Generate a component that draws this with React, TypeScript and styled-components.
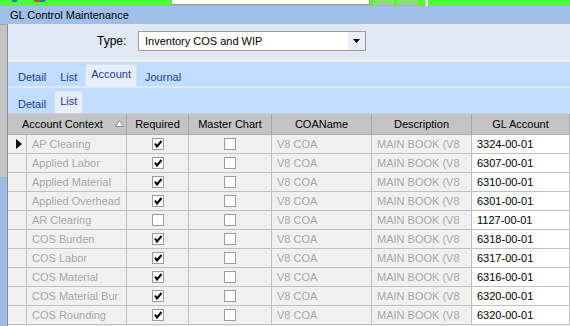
import React, { FC } from "react";
import styled, { createGlobalStyle } from "styled-components";

const GlobalStyle = createGlobalStyle`
  html, body {
    margin: 0;
    padding: 0;
    overflow: hidden;
    background: #ffffff;
  }
  body {
    font-family: "Liberation Sans", Arial, sans-serif;
    font-size: 11px;
    color: #000000;
  }
`;

type Row = {
  context: string;
  required: boolean;
  gl: string;
};

const rows: Row[] = [
  { context: "AP Clearing", required: true, gl: "3324-00-01" },
  { context: "Applied Labor", required: true, gl: "6307-00-01" },
  { context: "Applied Material", required: true, gl: "6310-00-01" },
  { context: "Applied Overhead", required: true, gl: "6301-00-01" },
  { context: "AR Clearing", required: false, gl: "1127-00-01" },
  { context: "COS Burden", required: true, gl: "6318-00-01" },
  { context: "COS Labor", required: true, gl: "6317-00-01" },
  { context: "COS Material", required: true, gl: "6316-00-01" },
  { context: "COS Material Bur", required: true, gl: "6320-00-01" },
  { context: "COS Rounding", required: true, gl: "6320-00-01" },
];

const COLS = "19px 100px 62px 83px 100px 100px 98px";

const CheckBox: FC<{ checked: boolean }> = ({ checked }) => (
  <svg width="12" height="12" viewBox="0 0 12 12">
    <rect x="0.5" y="0.5" width="11" height="11" fill="#ffffff" stroke="#9c9c9c" />
    {checked && (
      <path d="M3 5.5 L5 8.5 L9.5 3" fill="none" stroke="#000000" strokeWidth="2" />
    )}
  </svg>
);

const SortArrow: FC = () => (
  <svg width="9" height="7" viewBox="0 0 9 7">
    <path d="M4.5 0.5 L8.5 6.5 L0.5 6.5 Z" fill="#ffffff" stroke="#8a8a8a" />
  </svg>
);

const RowPointer: FC = () => (
  <svg width="6" height="10" viewBox="0 0 6 10">
    <path d="M0 0 L6 5 L0 10 Z" fill="#000000" />
  </svg>
);

export const App: FC = () => {
  return (
    <ScPage>
      <GlobalStyle />
      <ScTopStrip>
        <ScStripBit $color="#2f6fe0" $left={12} $width={5} />
        <ScStripBit $color="#a0642c" $left={17} $width={6} />
        <ScStripBit $color="#2f6fe0" $left={0} $width={5} />
        <ScStripField />
        <ScStripButton $left={3} />
        <ScStripButton $left={3} />
        <ScStripDivider />
      </ScTopStrip>
      <ScTitleBar>GL Control Maintenance</ScTitleBar>
      <ScBody>
        <ScLeftRail>
          <ScRailHandle />
        </ScLeftRail>
        <ScMain>
          <ScFilterPanel>
            <ScLabel>Type:</ScLabel>
            <ScSelect>
              <ScSelectText>Inventory COS and WIP</ScSelectText>
              <ScSelectButton>
                <svg width="7" height="4" viewBox="0 0 7 4">
                  <path d="M0 0 L7 0 L3.5 4 Z" fill="#000000" />
                </svg>
              </ScSelectButton>
            </ScSelect>
          </ScFilterPanel>
          <ScGap />
          <ScTabBar $height={24}>
            <ScTab>Detail</ScTab>
            <ScTab>List</ScTab>
            <ScTab $active>Account</ScTab>
            <ScTab>Journal</ScTab>
          </ScTabBar>
          <ScTabSeparator />
          <ScTabBar $height={25}>
            <ScTab>Detail</ScTab>
            <ScTab $active>List</ScTab>
          </ScTabBar>
          <ScGrid>
            <ScHeaderRow>
              <ScHeadCell $span={2} $align="left">
                <span>Account Context</span>
                <ScSortSlot>
                  <SortArrow />
                </ScSortSlot>
              </ScHeadCell>
              <ScHeadCell>Required</ScHeadCell>
              <ScHeadCell>Master Chart</ScHeadCell>
              <ScHeadCell>COAName</ScHeadCell>
              <ScHeadCell>Description</ScHeadCell>
              <ScHeadCell>GL Account</ScHeadCell>
            </ScHeaderRow>
            {rows.map((row, i) => (
              <ScDataRow key={row.context}>
                <ScIndicatorCell>{i === 0 && <RowPointer />}</ScIndicatorCell>
                <ScCell>{row.context}</ScCell>
                <ScCell $center>
                  <CheckBox checked={row.required} />
                </ScCell>
                <ScCell $center>
                  <CheckBox checked={false} />
                </ScCell>
                <ScCell>V8 COA</ScCell>
                <ScCell>MAIN BOOK (V8</ScCell>
                <ScCell $editable>{row.gl}</ScCell>
              </ScDataRow>
            ))}
          </ScGrid>
        </ScMain>
      </ScBody>
    </ScPage>
  );
};

export default App;

const ScPage = styled.div`
  width: 570px;
  height: 326px;
  display: flex;
  flex-direction: column;
  overflow: hidden;
`;

const ScTopStrip = styled.div`
  height: 6px;
  flex: 0 0 6px;
  display: flex;
  align-items: flex-start;
  background: #52fc2e;
`;

const ScStripBit = styled.div<{ $color: string; $left: number; $width: number }>`
  width: ${({ $width }) => $width}px;
  height: 2px;
  margin-left: ${({ $left }) => $left}px;
  background: ${({ $color }) => $color};
`;

const ScStripField = styled.div`
  width: 197px;
  height: 4px;
  margin-left: 127px;
  background: #ffffff;
  border-right: 1px solid #9a9a9a;
  border-bottom: 1px solid #9a9a9a;
`;

const ScStripButton = styled.div<{ $left: number }>`
  width: 21px;
  height: 4px;
  margin-left: ${({ $left }) => $left}px;
  background: #7de86a;
  border-bottom: 1px solid #a8c8a0;
`;

const ScStripDivider = styled.div`
  width: 2px;
  height: 6px;
  margin-left: 7px;
  background: #f4f4f4;
  border-left: 1px solid #c8c8c8;
`;

const ScTitleBar = styled.div`
  height: 18px;
  flex: 0 0 18px;
  display: flex;
  align-items: center;
  padding-left: 10px;
  background: #a0c0e8;
  font-size: 11px;
  color: #000000;
`;

const ScBody = styled.div`
  flex: 1;
  display: flex;
  min-height: 0;
`;

const ScLeftRail = styled.div`
  width: 7px;
  flex: 0 0 7px;
  display: flex;
  flex-direction: column;
  background: #9cbce6;
  border-right: 1px solid #8c8c8c;
`;

const ScRailHandle = styled.div`
  height: 152px;
  width: 7px;
  background: #c4c4c4;
  border-top: 1px solid #a4a4a4;
`;

const ScMain = styled.div`
  flex: 1;
  display: flex;
  flex-direction: column;
  min-width: 0;
`;

const ScFilterPanel = styled.div`
  height: 34px;
  flex: 0 0 34px;
  display: flex;
  align-items: center;
  background: #dfe8f4;
  padding-left: 89px;
`;

const ScLabel = styled.span`
  width: 41px;
  font-size: 12px;
`;

const ScSelect = styled.div`
  width: 226px;
  height: 18px;
  display: flex;
  align-items: center;
  background: #ffffff;
  border: 1px solid #9c9c9c;
`;

const ScSelectText = styled.span`
  flex: 1;
  padding-left: 6px;
  font-size: 11px;
`;

const ScSelectButton = styled.div`
  width: 17px;
  height: 18px;
  display: flex;
  align-items: center;
  justify-content: center;
  background: #e8eef8;
`;

const ScGap = styled.div`
  height: 4px;
  flex: 0 0 4px;
  background: #ececec;
`;

const ScTabBar = styled.div<{ $height: number }>`
  height: ${({ $height }) => $height}px;
  flex: 0 0 ${({ $height }) => $height}px;
  display: flex;
  align-items: flex-end;
  gap: 2px;
  padding-left: 4px;
  background: #c0dcff;
`;

const ScTab = styled.div<{ $active?: boolean }>`
  display: flex;
  align-items: center;
  padding: 0 5px;
  height: ${({ $active }) => ($active ? "22px" : "20px")};
  padding-bottom: ${({ $active }) => ($active ? "3px" : "0")};
  box-sizing: border-box;
  font-size: 11px;
  color: #1c3c8c;
  background: ${({ $active }) => ($active ? "#e6eefa" : "transparent")};
  border: 1px solid ${({ $active }) => ($active ? "#d6e2f2" : "transparent")};
  border-bottom: none;
  border-radius: 3px 3px 0 0;
`;

const ScTabSeparator = styled.div`
  height: 2px;
  flex: 0 0 2px;
  background: #e4e8ee;
`;

const ScGrid = styled.div`
  flex: 1;
  display: flex;
  flex-direction: column;
  background: #f0f0f0;
`;

const ScHeaderRow = styled.div`
  display: grid;
  grid-template-columns: ${COLS};
  height: 22px;
  flex: 0 0 22px;
  box-sizing: border-box;
  background: #c4c4c4;
  border-top: 1px solid #d0d0d0;
  border-bottom: 1px solid #b0b0b0;
`;

const ScHeadCell = styled.div<{ $span?: number; $align?: "left" | "center" }>`
  grid-column: span ${({ $span }) => $span ?? 1};
  display: flex;
  align-items: center;
  justify-content: ${({ $align }) => ($align === "left" ? "flex-start" : "center")};
  padding-left: ${({ $align }) => ($align === "left" ? "14px" : "0")};
  font-size: 11px;
  color: #000000;
  border-right: 1px solid #a8a8a8;
  white-space: nowrap;
`;

const ScSortSlot = styled.span`
  margin-left: auto;
  margin-right: 2px;
  display: flex;
  align-items: center;
  margin-top: -2px;
`;

const ScDataRow = styled.div`
  display: grid;
  grid-template-columns: ${COLS};
  height: 19px;
  flex: 0 0 19px;
  box-sizing: border-box;
  border-bottom: 1px solid #c0c0c0;
`;

const ScIndicatorCell = styled.div`
  display: flex;
  align-items: center;
  padding-left: 8px;
  border-right: 1px solid #c0c0c0;
`;

const ScCell = styled.div<{ $center?: boolean; $editable?: boolean }>`
  display: flex;
  align-items: center;
  justify-content: ${({ $center }) => ($center ? "center" : "flex-start")};
  padding-left: ${({ $center }) => ($center ? "0" : "5px")};
  overflow: hidden;
  white-space: nowrap;
  font-size: 11px;
  color: ${({ $editable }) => ($editable ? "#000000" : "#a8a8a8")};
  background: ${({ $editable }) => ($editable ? "#ffffff" : "transparent")};
  border-right: 1px solid #c0c0c0;
`;
